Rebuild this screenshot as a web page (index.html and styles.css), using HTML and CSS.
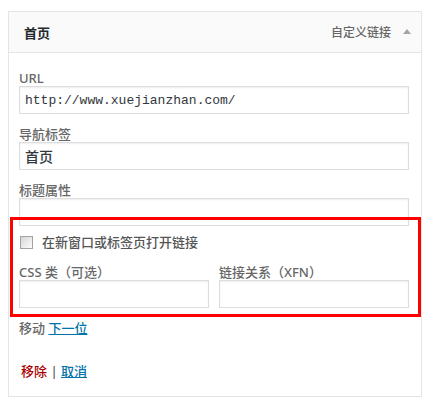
FILE: index.html
```html
<!DOCTYPE html>
<html lang="zh-CN">
<head>
    <meta charset="UTF-8">
    <meta name="viewport" content="width=device-width, initial-scale=1.0">
    <title>菜单项</title>
    <link rel="stylesheet" href="styles.css">
</head>
<body>
    <div class="menu-item">
        <div class="item-bar">
            <span class="item-title">首页</span>
            <span class="item-controls">
                <span class="item-type">自定义链接</span>
                <span class="item-arrow"></span>
            </span>
        </div>

        <div class="item-settings">
            <div class="field">
                <label for="url">URL</label>
                <input type="text" id="url" class="code" value="http://www.xuejianzhan.com/">
            </div>
            <div class="field">
                <label for="title">导航标签</label>
                <input type="text" id="title" value="首页">
            </div>
            <div class="field">
                <label for="attr">标题属性</label>
                <input type="text" id="attr">
            </div>

            <div class="field-target">
                <input type="checkbox" id="target">
                <label for="target">在新窗口或标签页打开链接</label>
            </div>

            <div class="field-row">
                <div class="field">
                    <label for="classes">CSS 类（可选）</label>
                    <input type="text" id="classes">
                </div>
                <div class="field">
                    <label for="xfn">链接关系（XFN）</label>
                    <input type="text" id="xfn">
                </div>
            </div>

            <p class="field-move">移动 <a href="#">下一位</a></p>

            <div class="item-actions">
                <a href="#" class="item-delete">移除</a>
                <span class="meta-sep">|</span>
                <a href="#" class="item-cancel">取消</a>
            </div>
        </div>

        <!-- annotation box drawn over the options -->
        <div class="highlight"></div>
    </div>
</body>
</html>
```

FILE: styles.css
```css
* {
    margin: 0;
    padding: 0;
    box-sizing: border-box;
}

body {
    background-color: #fff;
    color: #444;
    font-family: "Noto Sans", "Noto Sans CJK SC", sans-serif;
    font-size: 13px;
    font-weight: 500;
}

.menu-item {
    position: relative;
    width: 414px;
    margin: 11px 0 0 8px;
    border: 1px solid #e5e5e5;
    background-color: #fff;
}

.item-bar {
    display: flex;
    justify-content: space-between;
    align-items: center;
    height: 41px;
    padding: 0 10px 0 15px;
    background-color: #fafafa;
    border-bottom: 1px solid #e5e5e5;
}

.item-title {
    color: #23282d;
    font-weight: bold;
    font-size: 13px;
}

.item-controls {
    display: flex;
    align-items: center;
}

.item-type {
    color: #666;
    font-size: 12px;
}

.item-arrow {
    width: 0;
    height: 0;
    margin-left: 12px;
    margin-bottom: 2px;
    border-left: 4px solid transparent;
    border-right: 4px solid transparent;
    border-bottom: 5px solid #a0a5aa;
}

.item-settings {
    padding: 17px 12px 17px 10px;
}

.field {
    display: flex;
    flex-direction: column;
    margin-bottom: 12px;
}

.field label {
    color: #666;
    line-height: 16px;
}

input[type="text"] {
    width: 100%;
    height: 28px;
    padding: 3px 5px;
    border: 1px solid #ddd;
    box-shadow: inset 0 1px 2px rgba(0, 0, 0, 0.07);
    background-color: #fff;
    color: #32373c;
    font-family: "Noto Sans", "Noto Sans CJK SC", sans-serif;
    font-size: 14px;
    font-weight: 500;
    outline: none;
}

input.code {
    font-family: "Liberation Mono", monospace;
    font-size: 13px;
    font-weight: normal;
}

.field-target {
    display: flex;
    align-items: center;
    height: 16px;
    margin: -4px 0 14px;
}

.field-target label {
    color: #555;
    line-height: 16px;
}

input[type="checkbox"] {
    appearance: none;
    width: 13px;
    height: 13px;
    margin: 0 9px 0 1px;
    border: 1px solid #a3a3a3;
    background: linear-gradient(135deg, #d6d6d6, #fdfdfd);
}

.field-row {
    display: grid;
    grid-template-columns: 1fr 1fr;
    gap: 10px;
}

.field-move {
    color: #666;
    line-height: 16px;
    margin-bottom: 27px;
}

.field-move a,
.item-cancel {
    color: #0073aa;
    text-decoration: underline;
}

.item-actions {
    line-height: 16px;
    padding-left: 2px;
}

.item-delete {
    color: #a00;
    text-decoration: none;
}

.meta-sep {
    color: #555;
}

.highlight {
    position: absolute;
    left: 1px;
    top: 205px;
    width: 411px;
    height: 100px;
    border: 3px solid #f00;
    pointer-events: none;
}
```
